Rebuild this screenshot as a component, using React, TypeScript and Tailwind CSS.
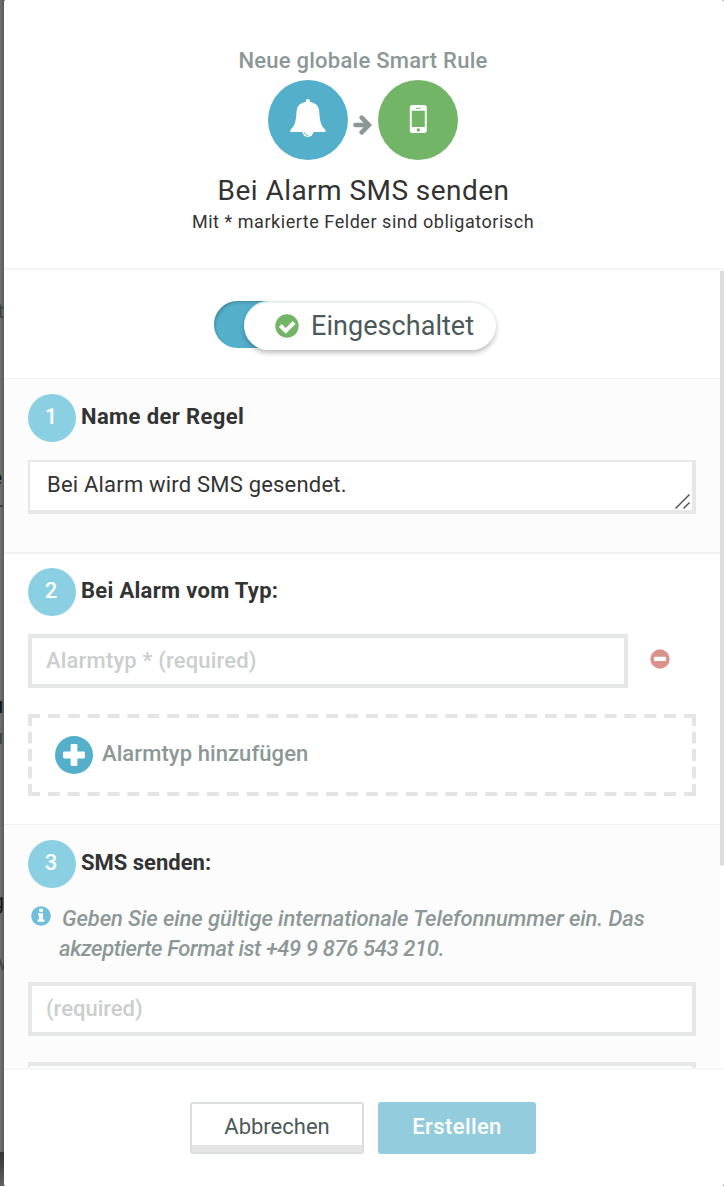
import React from "react";

function StepNumber({ children }: { children: React.ReactNode }) {
  return (
    <span className="flex h-12 w-12 shrink-0 items-center justify-center rounded-full bg-[#8bd0e2] pr-[2px] pb-[4px] text-[22px] font-medium text-white">
      {children}
    </span>
  );
}

function BellIcon() {
  return (
    <svg width="36" height="39" viewBox="0 0 36 39" fill="#fff">
      <path d="M12.200 32a5.700 5.900 0 0 0 11.400 0z" />
      <path d="M17.800 0c-1.100 0-1.900.8-1.900 1.800v1.100C10.600 3.600 7.400 6.300 6.700 11.300c-.5 4.300-.3 9-2 13.500C3.700 27.500 1.900 29.400.7 30.400c-1.100 1-.6 2.500.8 2.500h32.800c1.400 0 1.900-1.500.8-2.500-1.200-1-3-2.900-4-5.600-1.700-4.500-1.500-9.200-2-13.500-.7-5-4-7.700-9.300-8.400V1.800C19.800.8 19 0 17.800 0z" />
      <path d="M14.500 33.300c.3 1.900 1.600 3.100 3.600 3.400" fill="none" stroke="#54afcb" strokeWidth="0.9" />
    </svg>
  );
}

function ArrowIcon() {
  return (
    <svg width="19" height="20" viewBox="0 0 19 20" fill="none" stroke="#8b9897" strokeWidth="4.600">
      <path d="M2.500 10H15" strokeLinecap="round" />
      <path d="M8.700 2.600 15.800 10l-7.100 7.400" strokeLinecap="round" strokeLinejoin="miter" />
    </svg>
  );
}

function PhoneIcon() {
  return (
    <svg width="18" height="28" viewBox="0 0 18 28">
      <rect width="17" height="28" x="0.800" rx="2.800" fill="#fff" />
      <rect x="2.800" y="5.700" width="13" height="16.300" fill="#72b567" />
      <rect x="6.800" y="2.700" width="5" height="1" rx="0.500" fill="#72b567" />
      <circle cx="9.300" cy="25" r="1.700" fill="#72b567" />
    </svg>
  );
}

function CheckIcon() {
  return (
    <svg width="24" height="24" viewBox="0 0 24 24">
      <circle cx="12" cy="12" r="11.700" fill="#72b567" />
      <path d="m5.300 11.500 5.400 5.400 8.400-8.400" fill="none" stroke="#fff" strokeWidth="4" />
    </svg>
  );
}

function PlusIcon() {
  return (
    <svg width="38" height="38" viewBox="0 0 38 38">
      <circle cx="19" cy="19" r="19" fill="#54afcb" />
      <rect x="8" y="15.600" width="22" height="6.800" rx="1.400" fill="#fff" />
      <rect x="15.600" y="8" width="6.800" height="22" rx="1.400" fill="#fff" />
    </svg>
  );
}

function MinusIcon() {
  return (
    <svg width="20" height="20" viewBox="0 0 20 20">
      <circle cx="10" cy="10" r="9.700" fill="#dc928c" />
      <rect x="4" y="7.800" width="12" height="4.200" rx="0.800" fill="#fff" />
    </svg>
  );
}

function InfoIcon() {
  return (
    <svg width="20" height="20" viewBox="0 0 20 20">
      <circle cx="10" cy="10" r="9.800" fill="#72bfdc" />
      <path d="M8.300 2.700h3.700v3H8.300zM7 7.300h5v6.200h1.300v2.200H6.700v-2.200H8V9.500H7z" fill="#fff" />
    </svg>
  );
}

export default function App() {
  return (
    <div className="relative flex h-[1186px] w-[724px] overflow-hidden bg-[#6b6966] font-['Roboto','Liberation_Sans',sans-serif] text-[22px] text-[#333]">
      <div className="relative w-1 shrink-0 overflow-hidden bg-gradient-to-r from-[#73716e] to-[#5c5a58]">
        <span className="absolute top-[299px] right-0 text-[20px] leading-6 text-[#3d4141]">t</span>
        <span className="absolute top-[464px] right-[2px] text-[22px] leading-7 font-bold text-[#181818]">e</span>
        <span className="absolute top-[505px] left-0 h-[2px] w-[3px] bg-[#3d4141]" />
        <span className="absolute top-[692px] right-[1px] text-[22px] leading-7 font-bold text-[#181818]">u</span>
        <span className="absolute top-[725px] right-[1px] text-[20px] leading-6 text-[#3d4141]">u</span>
        <span className="absolute top-[888px] right-0 text-[22px] leading-7 text-[#181818]">g</span>
        <span className="absolute top-[951px] -left-[8px] text-[20px] leading-6 text-[#3d4141]">w</span>
        <span className="absolute bottom-0 left-0 h-[34px] w-1 bg-gradient-to-b from-[#363433] to-[#646260]" />
      </div>

      <main className="flex w-[720px] flex-col overflow-hidden rounded-[2px] bg-white">
        <header className="flex h-[268px] shrink-0 flex-col items-center pt-[47px] pr-[2px]">
          <div className="h-[33px] text-[22px] leading-7 font-medium tracking-[0.250px] text-[#8b9897]">Neue globale Smart Rule</div>
          <div className="flex h-20 items-center">
            <span className="flex h-20 w-20 items-center justify-center rounded-full bg-[#54afcb] pb-[3px]">
              <BellIcon />
            </span>
            <span className="flex w-[30px] justify-center pt-[10px] pr-px">
              <ArrowIcon />
            </span>
            <span className="flex h-20 w-20 items-center justify-center rounded-full bg-[#72b567] pb-[3px]">
              <PhoneIcon />
            </span>
          </div>
          <h1 className="mt-[13px] pl-[1px] text-[28px] leading-9 font-normal tracking-[0.450px]">Bei Alarm SMS senden</h1>
          <p className="mt-px text-[18px] leading-6 tracking-[0.540px]">Mit * markierte Felder sind obligatorisch</p>
        </header>
        <div className="h-[3px] shrink-0 bg-gradient-to-b from-[#f2f3f3] to-[#fafafa]" />

        <div className="flex h-[797px] shrink-0 overflow-hidden">
          <div className="flex w-[716px] flex-col">
            <section className="flex h-[107px] shrink-0 justify-center pt-[30px] pr-[14px]">
              <div className="flex h-[49px] w-[282px]">
                <div className="h-[47px] w-[80px] shrink-0 rounded-l-full bg-[#54afcb] shadow-[inset_2px_2px_3px_-1px_rgba(0,0,0,0.25)]" />
                <div className="-ml-[50px] flex h-[49px] flex-1 items-center rounded-full border-t-2 border-[#e5f0f3] bg-white pb-[2px] pl-[31px] shadow-[0_3px_5px_rgba(0,0,0,0.25)]">
                  <CheckIcon />
                  <span className="ml-[12px] text-[27px] leading-8 tracking-[0.050px] text-[#4b5959]">Eingeschaltet</span>
                </div>
              </div>
            </section>

            <section className="h-[174px] shrink-0 border-t border-[#f0f1f1] bg-[#fcfcfc] px-6 pt-[15px]">
              <div className="flex h-12 gap-[5px]">
                <StepNumber>1</StepNumber>
                <h2 className="pt-[9px] text-[22px] leading-7 font-bold tracking-[0.400px]">Name der Regel</h2>
              </div>
              <div className="relative mt-[18px] h-[54px] w-[668px] border-t-2 border-r-4 border-b-4 border-l-2 border-[#e6e8e7] bg-white pt-[9px] pl-[17px] leading-7">
                <span className="tracking-[0.200px]">Bei Alarm wird SMS gesendet.</span>
                <svg className="absolute right-[2px] bottom-px" width="15" height="15" viewBox="0 0 15 15" stroke="#555" strokeWidth="1.500">
                  <path d="M0.500 14.500 14.500 0.500M8.500 14.500l6-6" />
                </svg>
              </div>
            </section>

            <section className="h-[272px] shrink-0 border-t-2 border-[#f0f1f1] px-6 pt-[14px]">
              <div className="flex h-12 gap-[5px]">
                <StepNumber>2</StepNumber>
                <h2 className="pt-[9px] text-[22px] leading-7 font-bold tracking-[0.300px]">Bei Alarm vom Typ:</h2>
              </div>
              <div className="mt-[18px] flex">
                <div className="h-[54px] w-[600px] border-4 border-[#e6e8e7] pt-[9px] pl-[14px] leading-7 font-medium tracking-[0.180px] text-[#cacecd]">Alarmtyp * (required)</div>
                <div className="pt-[15px] pl-[22px]">
                  <MinusIcon />
                </div>
              </div>
              <div className="relative mt-[26px] flex h-[82px] w-[668px] items-center pl-[27px]">
                <span className="absolute top-0 left-0 h-[41px] w-[334px] origin-top-left scale-200 border-2 border-dashed border-[#e5e5e5]" />
                <PlusIcon />
                <span className="ml-[9px] pb-[3px] leading-7 font-medium tracking-[0.080px] text-[#8b9897]">Alarmtyp hinzufügen</span>
              </div>
            </section>

            <section className="h-[244px] shrink-0 border-t border-[#eeefef] bg-[#fcfcfc] px-6 pt-[15px]">
              <div className="flex h-12 gap-[5px]">
                <StepNumber>3</StepNumber>
                <h2 className="pt-[9px] text-[22px] leading-7 font-bold">SMS senden:</h2>
              </div>
              <div className="mt-[14px] flex h-[62px] pl-[3px] text-[#8b9897] italic">
                <div className="pt-[4px]">
                  <InfoIcon />
                </div>
                <p className="pt-[2px] pl-[8px] leading-[30px] font-medium whitespace-nowrap">
                  <span className="ml-[3px] tracking-[-0.100px]">Geben Sie eine gültige internationale Telefonnummer ein. Das</span>
                  <br />
                  <span className="tracking-[-0.370px]">akzeptierte Format ist +49 9 876 543 210.</span>
                </p>
              </div>
              <div className="mt-[18px] h-[54px] w-[668px] border-4 border-[#e6e8e7] bg-white pt-[9px] pl-[14px] leading-7 font-medium text-[#cacecd]">(required)</div>
              <div className="mt-[26px] h-[54px] w-[668px] border-4 border-l-2 border-[#e6e8e7] bg-white" />
            </section>
          </div>
          <div className="-mt-px h-[596px] w-1 rounded-full bg-[#dadedd]" />
        </div>

        <footer className="flex flex-1 items-start justify-center gap-[14px] border-t-2 border-[#f5f6f6] pt-[32px] pr-[2px]">
          <button className="h-[52px] w-[174px] rounded-[3px] border-2 border-[#dadedd] bg-white pb-[3px] leading-7 text-[#4b5959] shadow-[inset_0_-7px_0_#e5e5e5]">Abbrechen</button>
          <button className="h-[52px] w-[158px] rounded-[3px] bg-[#93ccdd] pb-[3px] leading-7 font-medium tracking-[0.400px] text-white">Erstellen</button>
        </footer>
      </main>
    </div>
  );
}
